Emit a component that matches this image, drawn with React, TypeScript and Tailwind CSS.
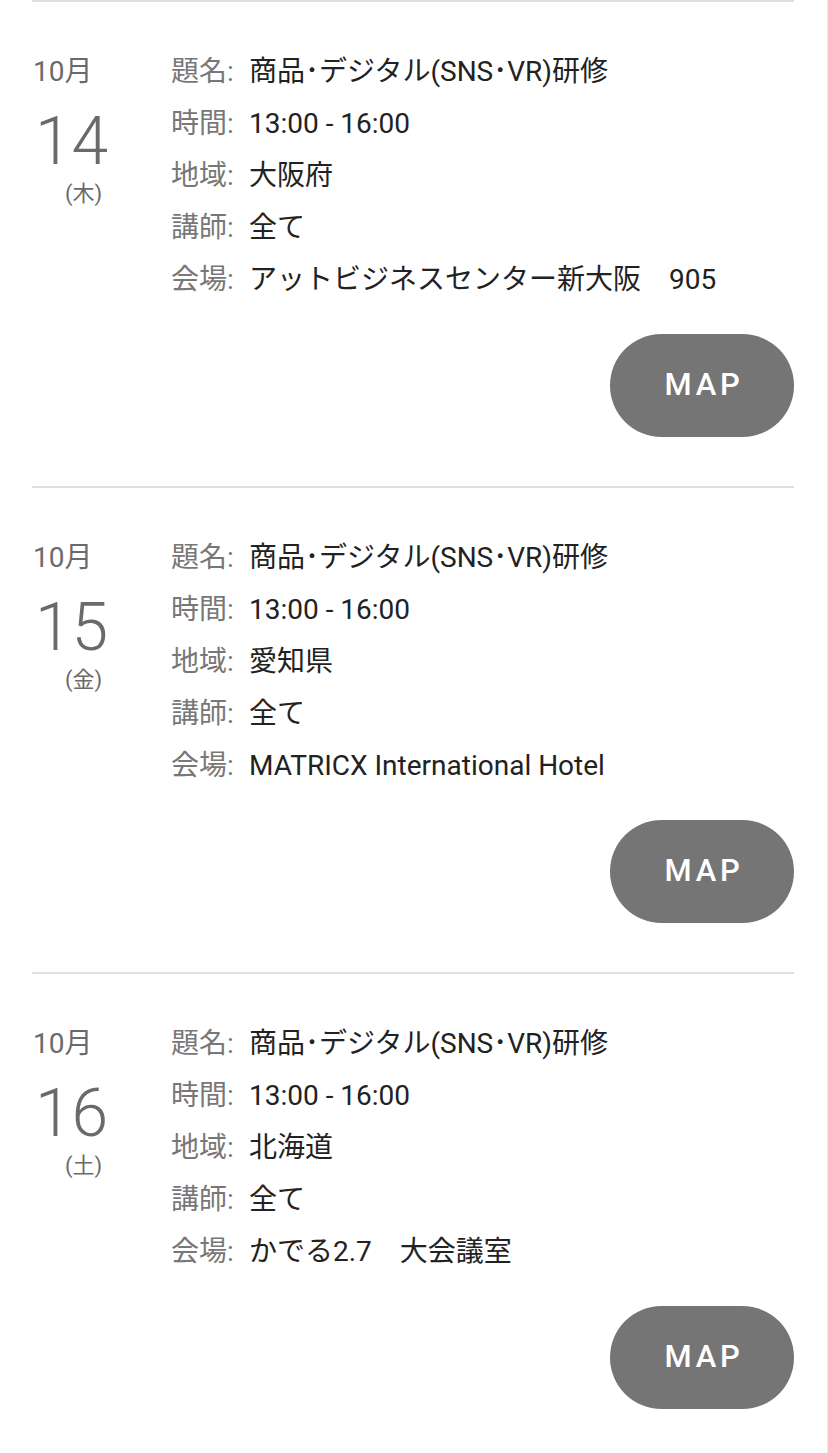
import React from "react";

type Entry = {
  day: string;
  dow: string;
  area: string;
  venue: string;
};

const entries: Entry[] = [
  { day: "14", dow: "木", area: "大阪府", venue: "アットビジネスセンター新大阪　905" },
  { day: "15", dow: "金", area: "愛知県", venue: "MATRICX International Hotel" },
  { day: "16", dow: "土", area: "北海道", venue: "かでる2.7　大会議室" },
];

function Row({ label, value }: { label: string; value: string }) {
  return (
    <div className="flex h-[52px] items-center whitespace-nowrap">
      <span className="w-[78px] shrink-0 text-[#777777]">{label}:</span>
      <span className="text-[#222222]">{value}</span>
    </div>
  );
}

function Item({ e }: { e: Entry }) {
  return (
    <div className="border-t-2 border-[#e0e0e0] pt-[44px] pb-[49px]">
      <div className="flex">
        <div className="w-[139px] shrink-0 pl-[1px] text-[#6a6a6a]">
          <div className="h-[52px] flex items-center text-[28px]">10月</div>
          <div className="mt-[12px] h-[64px] flex items-center pl-[2px] text-[66px] font-light leading-[64px]">
            {e.day}
          </div>
          <div className="mt-[5px] h-[30px] flex items-center pl-[32px] text-[22px] leading-[30px]">
            ({e.dow})
          </div>
        </div>
        <div className="flex-1 text-[28px] leading-[52px]">
          <Row label="題名" value="商品･デジタル(SNS･VR)研修" />
          <Row label="時間" value="13:00 - 16:00" />
          <Row label="地域" value={e.area} />
          <Row label="講師" value="全て" />
          <Row label="会場" value={e.venue} />
        </div>
      </div>
      <div className="mt-[28px] flex justify-end">
        <button className="flex h-[103px] w-[184px] items-center justify-center rounded-full bg-[#757575] pl-[4px] text-[31px] font-medium tracking-[0.12em] text-white">
          MAP
        </button>
      </div>
    </div>
  );
}

export default function App() {
  return (
    <div className="min-h-screen w-[828px] border-r border-[#ececec] bg-white">
      <div className="ml-[32px] mr-[33px] font-['Roboto','Noto_Sans_CJK_JP',sans-serif]">
        {entries.map((e) => (
          <Item key={e.day} e={e} />
        ))}
      </div>
    </div>
  );
}
